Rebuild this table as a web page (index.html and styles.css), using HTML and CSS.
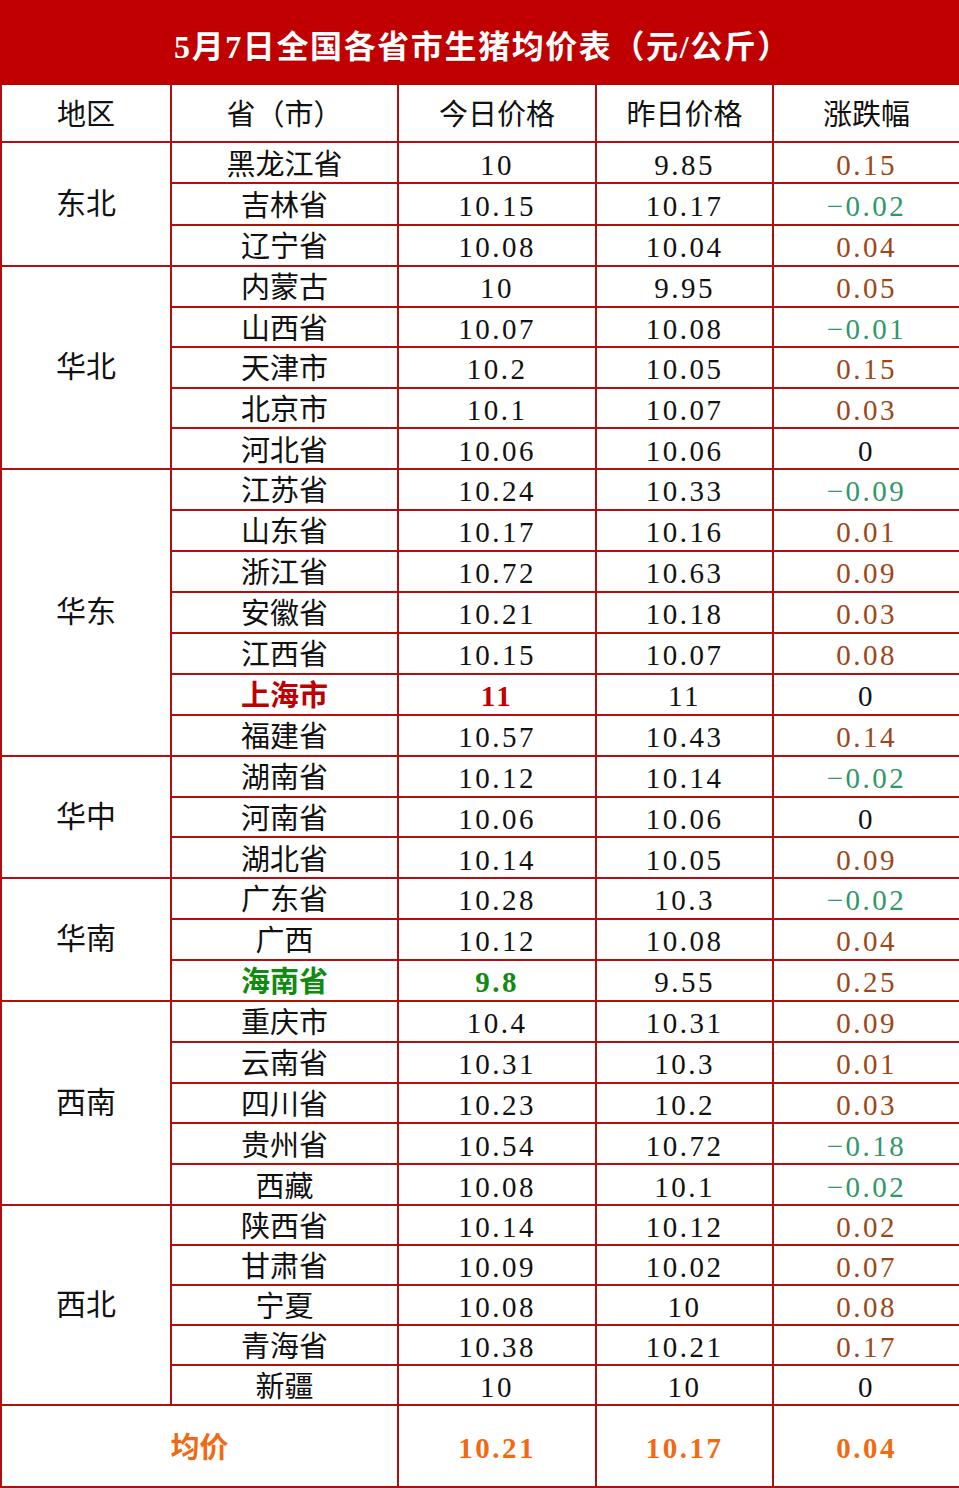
FILE: index.html
```html
<!DOCTYPE html>
<html lang="zh">
<head>
<meta charset="utf-8">
<title>5月7日全国各省市生猪均价表</title>
<link rel="stylesheet" href="styles.css">
</head>
<body>
<div class="sheet">
  <div class="title">5月7日全国各省市生猪均价表（元/公斤）</div>
  <table class="grid">
    <colgroup>
      <col class="c1"><col class="c2"><col class="c3"><col class="c4"><col class="c5">
    </colgroup>
    <thead>
      <tr class="head"><th>地区</th><th>省（市）</th><th>今日价格</th><th>昨日价格</th><th>涨跌幅</th></tr>
    </thead>
    <tbody class="g-db">
      <tr><td class="region" rowspan="3">东北</td><td>黑龙江省</td><td class="num">10</td><td class="num">9.85</td><td class="num up">0.15</td></tr>
      <tr><td>吉林省</td><td class="num">10.15</td><td class="num">10.17</td><td class="num down">−0.02</td></tr>
      <tr><td>辽宁省</td><td class="num">10.08</td><td class="num">10.04</td><td class="num up">0.04</td></tr>
    </tbody>
    <tbody class="g-hb">
      <tr><td class="region" rowspan="5">华北</td><td>内蒙古</td><td class="num">10</td><td class="num">9.95</td><td class="num up">0.05</td></tr>
      <tr><td>山西省</td><td class="num">10.07</td><td class="num">10.08</td><td class="num down">−0.01</td></tr>
      <tr><td>天津市</td><td class="num">10.2</td><td class="num">10.05</td><td class="num up">0.15</td></tr>
      <tr><td>北京市</td><td class="num">10.1</td><td class="num">10.07</td><td class="num up">0.03</td></tr>
      <tr><td>河北省</td><td class="num">10.06</td><td class="num">10.06</td><td class="num">0</td></tr>
    </tbody>
    <tbody class="g-hd">
      <tr><td class="region" rowspan="7">华东</td><td>江苏省</td><td class="num">10.24</td><td class="num">10.33</td><td class="num down">−0.09</td></tr>
      <tr><td>山东省</td><td class="num">10.17</td><td class="num">10.16</td><td class="num up">0.01</td></tr>
      <tr><td>浙江省</td><td class="num">10.72</td><td class="num">10.63</td><td class="num up">0.09</td></tr>
      <tr><td>安徽省</td><td class="num">10.21</td><td class="num">10.18</td><td class="num up">0.03</td></tr>
      <tr><td>江西省</td><td class="num">10.15</td><td class="num">10.07</td><td class="num up">0.08</td></tr>
      <tr><td class="hi-red">上海市</td><td class="num hi-red">11</td><td class="num">11</td><td class="num">0</td></tr>
      <tr><td>福建省</td><td class="num">10.57</td><td class="num">10.43</td><td class="num up">0.14</td></tr>
    </tbody>
    <tbody class="g-hz">
      <tr><td class="region" rowspan="3">华中</td><td>湖南省</td><td class="num">10.12</td><td class="num">10.14</td><td class="num down">−0.02</td></tr>
      <tr><td>河南省</td><td class="num">10.06</td><td class="num">10.06</td><td class="num">0</td></tr>
      <tr><td>湖北省</td><td class="num">10.14</td><td class="num">10.05</td><td class="num up">0.09</td></tr>
    </tbody>
    <tbody class="g-hn">
      <tr><td class="region" rowspan="3">华南</td><td>广东省</td><td class="num">10.28</td><td class="num">10.3</td><td class="num down">−0.02</td></tr>
      <tr><td>广西</td><td class="num">10.12</td><td class="num">10.08</td><td class="num up">0.04</td></tr>
      <tr><td class="hi-green">海南省</td><td class="num hi-green">9.8</td><td class="num">9.55</td><td class="num up">0.25</td></tr>
    </tbody>
    <tbody class="g-xn">
      <tr><td class="region" rowspan="5">西南</td><td>重庆市</td><td class="num">10.4</td><td class="num">10.31</td><td class="num up">0.09</td></tr>
      <tr><td>云南省</td><td class="num">10.31</td><td class="num">10.3</td><td class="num up">0.01</td></tr>
      <tr><td>四川省</td><td class="num">10.23</td><td class="num">10.2</td><td class="num up">0.03</td></tr>
      <tr><td>贵州省</td><td class="num">10.54</td><td class="num">10.72</td><td class="num down">−0.18</td></tr>
      <tr><td>西藏</td><td class="num">10.08</td><td class="num">10.1</td><td class="num down">−0.02</td></tr>
    </tbody>
    <tbody class="g-xb">
      <tr><td class="region" rowspan="5">西北</td><td>陕西省</td><td class="num">10.14</td><td class="num">10.12</td><td class="num up">0.02</td></tr>
      <tr><td>甘肃省</td><td class="num">10.09</td><td class="num">10.02</td><td class="num up">0.07</td></tr>
      <tr><td>宁夏</td><td class="num">10.08</td><td class="num">10</td><td class="num up">0.08</td></tr>
      <tr><td>青海省</td><td class="num">10.38</td><td class="num">10.21</td><td class="num up">0.17</td></tr>
      <tr><td>新疆</td><td class="num">10</td><td class="num">10</td><td class="num">0</td></tr>
    </tbody>
    <tfoot>
      <tr class="foot"><td colspan="2">均价</td><td class="num">10.21</td><td class="num">10.17</td><td class="num">0.04</td></tr>
    </tfoot>
  </table>
</div>
</body>
</html>
```

FILE: styles.css
```css
html, body {
  margin: 0;
  padding: 0;
  background: #ffffff;
}

.sheet {
  width: 959px;
  font-family: "Liberation Serif", "Noto Sans CJK SC", serif;
  color: #111111;
}

.title {
  height: 85px;
  background: #c00000;
  color: #ffffff;
  font-size: 32px;
  font-weight: bold;
  letter-spacing: 1.6px;
  display: flex;
  align-items: center;
  justify-content: center;
  padding-top: 2px;
  padding-left: 6px;
  box-sizing: border-box;
}

.grid {
  width: 959px;
  table-layout: fixed;
  border-collapse: collapse;
  border-spacing: 0;
}

.c1 { width: 170px; }
.c2 { width: 227px; }
.c3 { width: 198px; }
.c4 { width: 177px; }
.c5 { width: 187px; }

.grid th,
.grid td {
  border: 2px solid #b30f0f;
  padding: 4px 0 0 0;
  text-align: center;
  vertical-align: middle;
  font-size: 29px;
  font-weight: normal;
  line-height: 34px;
  white-space: nowrap;
  overflow: hidden;
}

.grid thead th {
  border-top: none;
  height: 52px;
}

.g-db tr { height: 41.33px; }
.g-hb tr { height: 40.6px; }
.g-hd tr { height: 41px; }
.g-hz tr { height: 40.67px; }
.g-hn tr { height: 41px; }
.g-xn tr { height: 40.8px; }
.g-xb tr { height: 39.8px; }

.grid td.region {
  font-size: 30px;
  padding-top: 0;
}

.num {
  letter-spacing: 2.5px;
}

.up { color: #9c4718; }
.down { color: #2f9866; }

.hi-red {
  color: #c00000;
  font-weight: bold !important;
}

.hi-green {
  color: #118a11;
  font-weight: bold !important;
}

.grid .foot td {
  height: 76px;
  color: #f06a14;
  font-weight: bold;
  font-size: 29px;
}
```
